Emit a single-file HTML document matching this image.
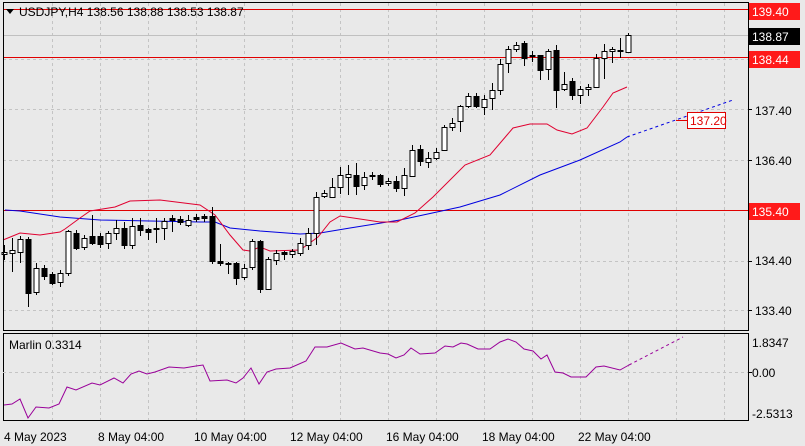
<!DOCTYPE html>
<html><head><meta charset="utf-8"><style>
body{margin:0;background:#e9e9e9;width:805px;height:446px;overflow:hidden;font-family:"Liberation Sans",sans-serif}
svg{display:block}
text{font-family:"Liberation Sans",sans-serif;font-size:12px}
</style></head><body>
<svg id="s" width="805" height="446" xmlns="http://www.w3.org/2000/svg">
<rect width="805" height="446" fill="#e9e9e9"/>
<g id="grid" stroke="#c4c4c4" stroke-dasharray="3,3" stroke-width="1"></g>
<line x1="3" y1="35.5" x2="748" y2="35.5" stroke="#c0c0c0"/>
<line x1="3" y1="9.5" x2="748" y2="9.5" stroke="#e00000"/>
<line x1="3" y1="57.5" x2="748" y2="57.5" stroke="#e00000"/>
<line x1="3" y1="210.5" x2="748" y2="210.5" stroke="#e00000"/>
<polyline fill="none" stroke="#0000e0" points="5,210 20,211 60,217 100,220 150,221 200,222 215,222 230,228 250,230 260,231 300,234 320,233 350,228 400,220 460,207 500,195 540,175 580,160 620,142 627,137"/>
<polyline fill="none" stroke="#0000e0" stroke-dasharray="3,3" points="627,137 733,100"/>
<polyline fill="none" stroke="#e00030" points="3,240 20,233 40,235 60,232 65,229 80,218 90,211 115,207 130,201 160,200 200,205 215,215 230,235 243,250 250,251 260,247 270,251 300,250 318,237 330,222 340,216 360,219 380,222 397,222 415,213 433,197 465,165 490,155 513,128 530,124 547,124 557,130 572,134 587,128 603,107 613,93 627,87"/>
<g id="candles"></g>
<line x1="676" y1="120.5" x2="687" y2="120.5" stroke="#e00000"/>
<rect x="687.5" y="112.5" width="38" height="16" fill="#fff" stroke="#e00000"/>
<text x="690" y="125" fill="#e00000">137.20</text>
<rect x="3.5" y="2.5" width="745" height="328" fill="none" stroke="#000"/>
<rect x="3.5" y="333.5" width="745" height="87" fill="none" stroke="#000"/>
<line x1="3" y1="372.5" x2="748" y2="372.5" stroke="#c4c4c4" stroke-dasharray="3,3"/>
<polyline fill="none" stroke="#990099" points="4,405 12,404 20,399 28,418 36,407 49,408 59,404 67,387 76,390 92,383 100,385 114,378 123,383 131,374 139,371 147,374 155,372 169,367 184,368 196,366 203,365 210,381 227,380 236,383 243,378 251,368 259,384 267,372 276,369 290,368 306,361 315,347 327,347 341,343 355,349 363,348 380,353 388,354 396,358 404,355 411,348 420,354 435,353 445,346 453,347 461,343 467,344 478,349 490,349 500,342 508,339 516,342 524,349 533,351 541,359 547,355 555,372 563,373 571,377 586,377 596,367 604,366 620,370 629,365"/>
<polyline fill="none" stroke="#990099" stroke-dasharray="3,3" points="629,365 683,337"/>
<polygon points="6,9 14,9 10,14" fill="#000"/>
<text x="19" y="16" fill="#000">USDJPY,H4  138.56 138.88 138.53 138.87</text>
<text x="9" y="349" fill="#000">Marlin 0.3314</text>
<rect x="749" y="3" width="51" height="17" fill="#ff1a1a"/><text x="752" y="16" fill="#fff" font-size="13">139.40</text>
<rect x="749" y="28" width="51" height="17" fill="#000"/><text x="752" y="41" fill="#fff" font-size="13">138.87</text>
<rect x="749" y="51" width="51" height="17" fill="#ff1a1a"/><text x="752" y="64" fill="#fff" font-size="13">138.44</text>
<rect x="749" y="203" width="51" height="17" fill="#ff1a1a"/><text x="752" y="216" fill="#fff" font-size="13">135.40</text>
<g fill="#000" font-size="13">
<text x="755" y="115">137.40</text><text x="755" y="165">136.40</text><text x="755" y="265">134.40</text><text x="755" y="315">133.40</text>
<text x="752" y="347">1.8347</text><text x="752" y="377">0.00</text><text x="752" y="418">-2.5313</text>
</g>
<g stroke="#000"><line x1="748" y1="109.5" x2="752" y2="109.5"/><line x1="748" y1="160.5" x2="752" y2="160.5"/><line x1="748" y1="261.5" x2="752" y2="261.5"/><line x1="748" y1="310.5" x2="752" y2="310.5"/><line x1="748" y1="372.5" x2="752" y2="372.5"/></g>
<g fill="#000" font-size="13">
<text x="4" y="441">4 May 2023</text><text x="98" y="441">8 May 04:00</text><text x="194" y="441">10 May 04:00</text><text x="290" y="441">12 May 04:00</text><text x="386" y="441">16 May 04:00</text><text x="482" y="441">18 May 04:00</text><text x="578" y="441">22 May 04:00</text>
</g>
</svg>
<script>
var NS="http://www.w3.org/2000/svg",g=document.getElementById('grid'),c=document.getElementById('candles');
function el(p,t,a){var e=document.createElementNS(NS,t);for(var k in a)e.setAttribute(k,a[k]);p.appendChild(e);return e;}
for(var x=52;x<748;x+=48){el(g,'line',{x1:x+.5,y1:3,x2:x+.5,y2:330});el(g,'line',{x1:x+.5,y1:334,x2:x+.5,y2:420});}
[59,109,160,261,310].forEach(function(y){el(g,'line',{x1:3,y1:y+.5,x2:748,y2:y+.5});});
var d=[[1,252,254,245,260],[1,250,253,238,272],[1,239,252,236,263],[0,239,293,237,307],[1,268,292,263,295],[0,268,276,265,280],[0,274,283,272,285],[1,273,282,270,287],[1,231,273,230,276],[0,233,248,230,250],[1,238,247,235,250],[0,236,243,215,245],[0,236,244,233,248],[1,233,243,231,249],[1,228,233,220,240],[0,228,245,222,249],[1,226,245,218,249],[0,225,230,218,236],[0,229,232,228,240],[0,228,229,218,243],[1,221,228,218,240],[0,218,220,215,232],[0,219,222,216,225],[1,220,225,215,227],[0,217,219,214,222],[0,216,218,214,222],[0,216,261,207,264],[0,261,263,244,266],[0,263,264,262,274],[0,263,278,262,285],[1,268,277,264,280],[1,241,267,239,270],[0,241,289,240,293],[1,259,289,257,290],[1,253,260,250,265],[0,252,254,251,260],[1,251,254,249,258],[1,243,253,238,256],[1,233,245,228,250],[1,197,233,192,245],[1,193,196,190,198],[1,187,197,178,198],[1,175,187,167,194],[1,174,177,165,195],[0,175,186,163,195],[1,177,185,172,190],[0,175,176,172,180],[0,175,184,174,187],[1,181,183,178,186],[0,181,188,176,192],[1,175,188,168,196],[1,150,176,145,176],[0,149,161,145,166],[1,158,162,152,168],[1,152,158,148,160],[1,127,150,125,151],[1,123,127,118,131],[1,106,121,105,132],[1,96,106,93,108],[0,96,106,93,108],[1,99,107,95,115],[1,90,98,83,110],[1,64,90,59,95],[1,49,63,46,73],[1,45,49,42,52],[0,43,58,41,66],[1,55,56,51,62],[0,55,70,55,80],[1,51,69,49,80],[0,50,90,45,108],[1,84,89,72,91],[0,81,95,78,100],[1,89,95,86,104],[1,87,89,84,96],[1,58,87,54,88],[1,51,58,44,79],[1,49,51,47,63],[0,50,51,38,58],[1,35,52,33,53]];
for(var i=0;i<d.length;i++){var q=d[i],x=4+8*i+.5;
el(c,'line',{x1:x,y1:q[3],x2:x,y2:q[4],stroke:'#000'});
el(c,'rect',{x:x-2.5,y:q[1]+.5,width:5,height:Math.max(1,q[2]-q[1]),fill:q[0]?'#fff':'#000',stroke:'#000'});}
</script>
</body></html>
